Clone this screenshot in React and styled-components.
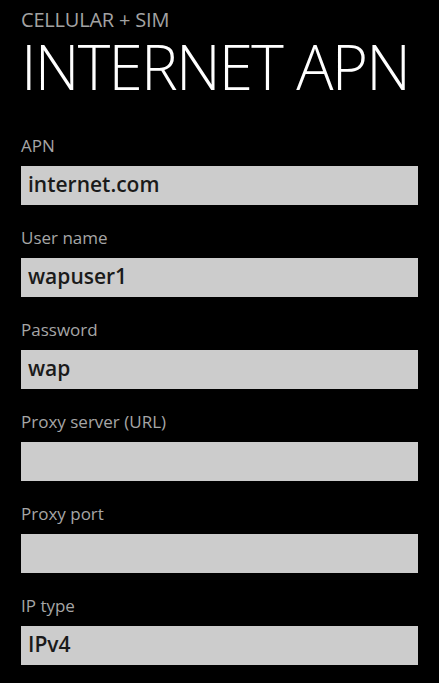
import React from "react";
import styled, { createGlobalStyle } from "styled-components";

const GlobalStyle = createGlobalStyle`
  html, body {
    margin: 0;
    padding: 0;
    background: #000;
  }
  body {
    font-family: "Open Sans", "Noto Sans", sans-serif;
  }
`;

const fields = [
  { label: "APN", value: "internet.com" },
  { label: "User name", value: "wapuser1" },
  { label: "Password", value: "wap" },
  { label: "Proxy server (URL)", value: "" },
  { label: "Proxy port", value: "" },
  { label: "IP type", value: "IPv4" },
];

const App = () => {
  return (
    <Page>
      <GlobalStyle />
      <Header>
        <Subtitle>CELLULAR + SIM</Subtitle>
        <Title>INTERNET APN</Title>
      </Header>
      <Form>
        {fields.map((f) => (
          <Group key={f.label}>
            <Label>{f.label}</Label>
            <Field>{f.value}</Field>
          </Group>
        ))}
      </Form>
    </Page>
  );
};
export default App;

const Page = styled.div`
  width: 439px;
  height: 683px;
  box-sizing: border-box;
  padding: 8px 21px 0;
  background: #000;
  overflow: hidden;
`;

const Header = styled.header`
  display: flex;
  flex-direction: column;
`;

const Subtitle = styled.div`
  font-size: 20px;
  line-height: 24px;
  color: #a3a3a3;
  letter-spacing: -0.2px;
`;

const Title = styled.h1`
  margin: 6px 0 0;
  font-size: 62px;
  line-height: 56px;
  font-weight: 300;
  letter-spacing: -1.8px;
  color: #fff;
  white-space: nowrap;
`;

const Form = styled.div`
  display: flex;
  flex-direction: column;
  gap: 23.2px;
  margin-top: 41.5px;
`;

const Group = styled.div`
  display: flex;
  flex-direction: column;
`;

const Label = styled.label`
  font-size: 17px;
  line-height: 20px;
  color: #a6a6a6;
  margin-bottom: 10px;
`;

const Field = styled.div`
  height: 39px;
  box-sizing: border-box;
  background: #cccccc;
  padding: 0 7px;
  font-size: 21px;
  line-height: 36px;
  font-weight: 600;
  color: #1a1a1a;
`;
